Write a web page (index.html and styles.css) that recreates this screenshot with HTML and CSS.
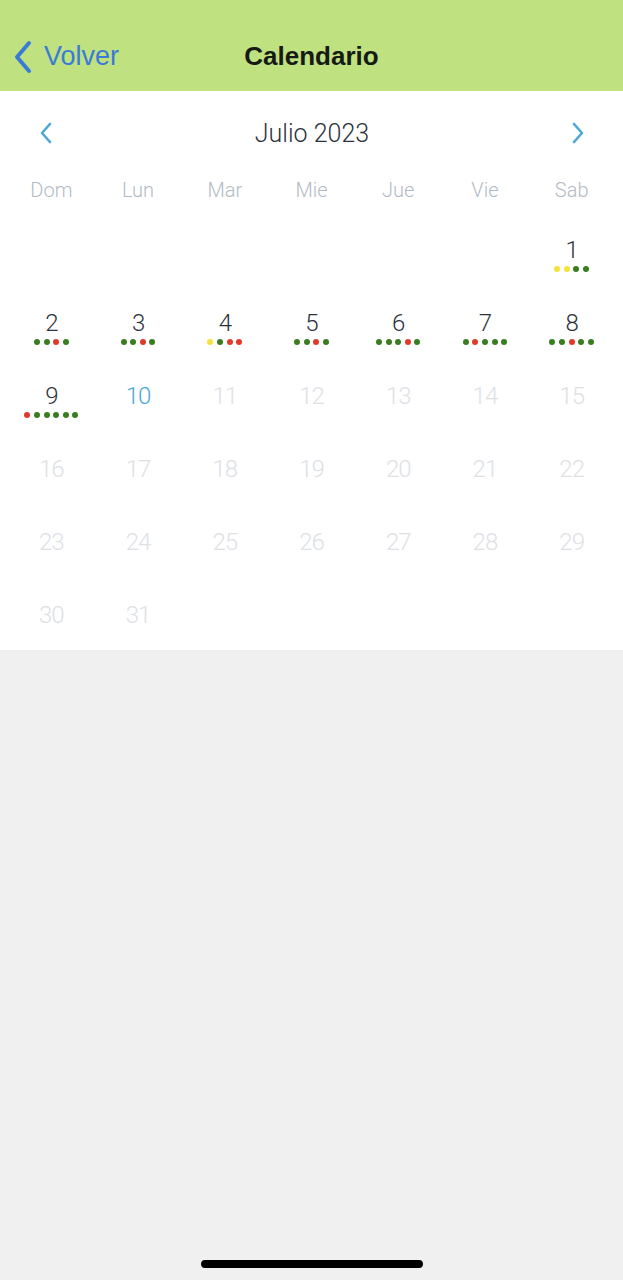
FILE: index.html
```html
<!DOCTYPE html>
<html lang="es">
<head>
<meta charset="utf-8">
<title>Calendario</title>
<link rel="stylesheet" href="styles.css">
</head>
<body>
<header class="topbar">
  <a class="back">
    <svg class="back-icon" width="22" height="34" viewBox="0 0 22 34"><path d="M17 3 L5 17 L17 31" fill="none" stroke="currentColor" stroke-width="4" stroke-linecap="round" stroke-linejoin="round"/></svg>
    <span>Volver</span>
  </a>
  <h1 class="title">Calendario</h1>
</header>
<main class="calendar">
  <div class="month-nav">
    <svg class="nav-arrow" width="14" height="22" viewBox="0 0 14 22"><path d="M11 2 L3 11 L11 20" fill="none" stroke="currentColor" stroke-width="2.6" stroke-linecap="round" stroke-linejoin="round"/></svg>
    <span class="month">Julio 2023</span>
    <svg class="nav-arrow" width="14" height="22" viewBox="0 0 14 22"><path d="M3 2 L11 11 L3 20" fill="none" stroke="currentColor" stroke-width="2.6" stroke-linecap="round" stroke-linejoin="round"/></svg>
  </div>
  <div class="weekdays">
    <span>Dom</span><span>Lun</span><span>Mar</span><span>Mie</span><span>Jue</span><span>Vie</span><span>Sab</span>
  </div>
  <div class="days">
    <div class="day"></div><div class="day"></div><div class="day"></div><div class="day"></div><div class="day"></div><div class="day"></div>
    <div class="day"><span class="num">1</span><div class="dots"><i class="y"></i><i class="y"></i><i class="g"></i><i class="g"></i></div></div>
    <div class="day"><span class="num">2</span><div class="dots"><i class="g"></i><i class="g"></i><i class="r"></i><i class="g"></i></div></div>
    <div class="day"><span class="num">3</span><div class="dots"><i class="g"></i><i class="g"></i><i class="r"></i><i class="g"></i></div></div>
    <div class="day"><span class="num">4</span><div class="dots"><i class="y"></i><i class="g"></i><i class="r"></i><i class="r"></i></div></div>
    <div class="day"><span class="num">5</span><div class="dots"><i class="g"></i><i class="g"></i><i class="r"></i><i class="g"></i></div></div>
    <div class="day"><span class="num">6</span><div class="dots"><i class="g"></i><i class="g"></i><i class="g"></i><i class="r"></i><i class="g"></i></div></div>
    <div class="day"><span class="num">7</span><div class="dots"><i class="g"></i><i class="r"></i><i class="g"></i><i class="g"></i><i class="g"></i></div></div>
    <div class="day"><span class="num">8</span><div class="dots"><i class="g"></i><i class="g"></i><i class="r"></i><i class="g"></i><i class="g"></i></div></div>
    <div class="day"><span class="num">9</span><div class="dots"><i class="r"></i><i class="g"></i><i class="g"></i><i class="g"></i><i class="g"></i><i class="g"></i></div></div>
    <div class="day today"><span class="num">10</span></div>
    <div class="day off"><span class="num">11</span></div>
    <div class="day off"><span class="num">12</span></div>
    <div class="day off"><span class="num">13</span></div>
    <div class="day off"><span class="num">14</span></div>
    <div class="day off"><span class="num">15</span></div>
    <div class="day off"><span class="num">16</span></div>
    <div class="day off"><span class="num">17</span></div>
    <div class="day off"><span class="num">18</span></div>
    <div class="day off"><span class="num">19</span></div>
    <div class="day off"><span class="num">20</span></div>
    <div class="day off"><span class="num">21</span></div>
    <div class="day off"><span class="num">22</span></div>
    <div class="day off"><span class="num">23</span></div>
    <div class="day off"><span class="num">24</span></div>
    <div class="day off"><span class="num">25</span></div>
    <div class="day off"><span class="num">26</span></div>
    <div class="day off"><span class="num">27</span></div>
    <div class="day off"><span class="num">28</span></div>
    <div class="day off"><span class="num">29</span></div>
    <div class="day off"><span class="num">30</span></div>
    <div class="day off"><span class="num">31</span></div>
  </div>
</main>
<div class="home-indicator"></div>
</body>
</html>
```

FILE: styles.css
```css
html, body {
  margin: 0;
  padding: 0;
}
body {
  width: 623px;
  height: 1280px;
  background: #f0f0f0;
  font-family: "Roboto", "Liberation Sans", sans-serif;
  display: flex;
  flex-direction: column;
  overflow: hidden;
}
.topbar {
  height: 91px;
  background: #bfe17f;
  display: flex;
  align-items: center;
  padding-top: 22px;
  box-sizing: border-box;
  position: relative;
}
.back {
  display: flex;
  align-items: center;
  gap: 10px;
  color: #3a7bd8;
  font-family: "Liberation Sans", Arial, sans-serif;
  font-size: 27px;
  padding-left: 12px;
}
.back-icon {
  display: block;
}
.title {
  position: absolute;
  left: 0;
  right: 0;
  top: 22px;
  bottom: 0;
  margin: 0;
  display: flex;
  align-items: center;
  justify-content: center;
  font-family: "Liberation Sans", Arial, sans-serif;
  font-weight: 700;
  font-size: 26px;
  color: #161a14;
  pointer-events: none;
}
.calendar {
  background: #ffffff;
  padding: 0 8px 5px;
}
.month-nav {
  height: 82px;
  box-sizing: border-box;
  padding: 2px 30px 0 31px;
  display: flex;
  align-items: center;
  justify-content: space-between;
  color: #4aa9d9;
}
.month {
  font-size: 25px;
  font-weight: 300;
  color: #2c323c;
}
.weekdays {
  height: 34px;
  display: grid;
  grid-template-columns: repeat(7, 1fr);
  align-items: center;
  text-align: center;
  font-size: 20px;
  font-weight: 300;
  color: #b2bbc5;
}
.days {
  display: grid;
  grid-template-columns: repeat(7, 1fr);
  grid-auto-rows: 73px;
}
.day {
  display: flex;
  flex-direction: column;
  align-items: center;
  padding-top: 28px;
}
.num {
  font-size: 24px;
  font-weight: 300;
  line-height: 30px;
  color: #2c323c;
  letter-spacing: -1px;
}
.today .num {
  color: #4aa9d9;
}
.off .num {
  color: #dde1e6;
}
.dots {
  display: flex;
  gap: 3.6px;
  margin-top: 1px;
}
.dots i {
  width: 6px;
  height: 6px;
  border-radius: 50%;
  display: block;
}
.dots .g { background: #3a7d1f; }
.dots .r { background: #e3392b; }
.dots .y { background: #f4e33b; }
.home-indicator {
  margin: auto auto 12px;
  width: 222px;
  height: 8px;
  border-radius: 4px;
  background: #000;
}
```
